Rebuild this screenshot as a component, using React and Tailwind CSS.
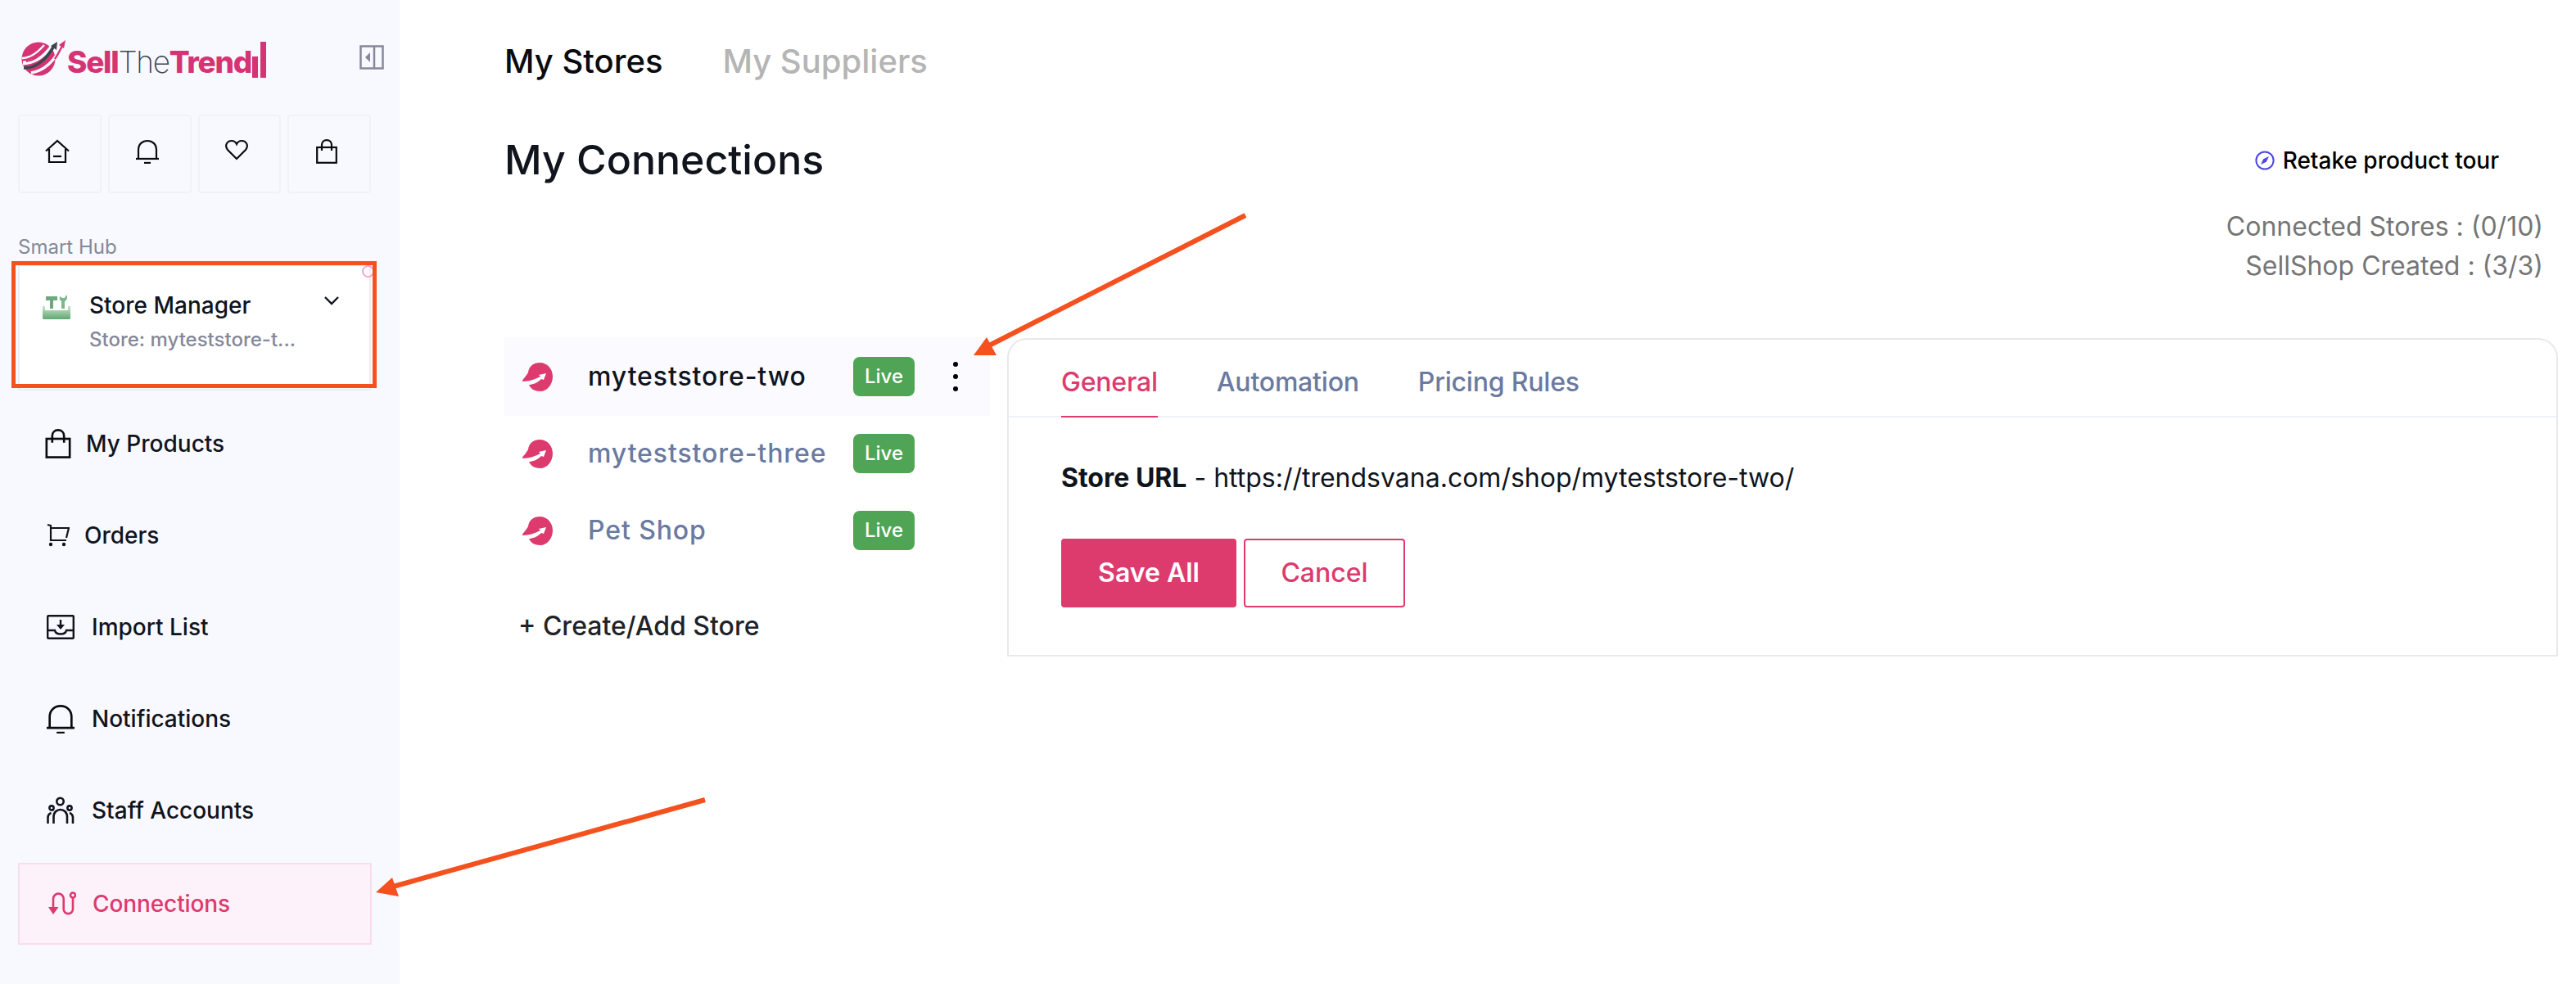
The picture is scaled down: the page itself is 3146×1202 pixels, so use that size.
import React from 'react';

const LogoMark = () => (
    <svg width="56" height="46" viewBox="0 0 56 46" fill="none">
        <circle cx="21" cy="24" r="20.5" fill="#d63375" />
        <path d="M1 23 C10 23 20 16 28 7" stroke="#f8f9fe" strokeWidth="2.5" />
        <path d="M2 29 C14 29 27 21 38 8" stroke="#f8f9fe" strokeWidth="5" />
        <path d="M6 27 C16 26 25 19 33 9" stroke="#d63375" strokeWidth="2" />
        <path d="M3 35 C18 36 31 24 40 8" stroke="#3d4650" strokeWidth="3.6" />
        <path d="M36 8 L44 3 L43 13 Z" fill="#3d4650" />
        <path d="M12 41 C30 38 42 24 50 7" stroke="#f8f9fe" strokeWidth="3.4" />
        <path d="M41 24 C44 20 47 14 49.5 9" stroke="#d63375" strokeWidth="2.4" />
        <path d="M46 7 L54 1 L52 11 Z" fill="#d63375" />
    </svg>
);

const CollapseIcon = () => (
    <svg width="30" height="30" viewBox="0 0 30 30" fill="none" stroke="#85889a" strokeWidth="2.5">
        <rect x="1.5" y="1.5" width="27" height="27" />
        <path d="M18 2 V28" />
        <path d="M13 9 L7 15 L13 21 Z" fill="#85889a" stroke="none" />
    </svg>
);

const HomeIcon = () => (
    <svg width="30" height="30" viewBox="0 0 30 30" fill="none" stroke="#0b0b0f" strokeWidth="2.2">
        <path d="M1 14.5 L15 2 L29 14.5" />
        <path d="M5 12 V28 H25 V12" />
        <path d="M10 21 H20" />
    </svg>
);

const BellIcon = ({ size = 28 }) => (
    <svg width={size} height={size * 1.07} viewBox="0 0 28 30" fill="none" stroke="#0b0b0f" strokeWidth="2.2">
        <path d="M3 24 V13 C3 6 8 2 14 2 C20 2 25 6 25 13 V24" />
        <path d="M0 24 H28" />
        <path d="M10 29 H18" />
    </svg>
);

const HeartIcon = () => (
    <svg width="28" height="26" viewBox="0 0 28 26" fill="none" stroke="#0b0b0f" strokeWidth="2.2">
        <path d="M14 24 L3 13 C-1 8 2 2 8 2 C11 2 13 4 14 6 C15 4 17 2 20 2 C26 2 29 8 25 13 Z" />
    </svg>
);

const BagIcon = ({ w = 26, h = 30 }) => (
    <svg width={w} height={h} viewBox="0 0 26 30" fill="none" stroke="#0b0b0f" strokeWidth="2.2">
        <rect x="1.2" y="10" width="23.6" height="18.8" />
        <path d="M7 14 V7 C7 3.5 9.5 1.2 13 1.2 C16.5 1.2 19 3.5 19 7 V14" />
    </svg>
);

const CartIcon = () => (
    <svg width="28" height="28" viewBox="0 0 28 28" fill="none" stroke="#10141c" strokeWidth="2.2">
        <path d="M1 1 L5 2 V20 H24" />
        <path d="M5 5 H27 L24 17" />
        <circle cx="5" cy="25" r="2.2" fill="#10141c" stroke="none" />
        <circle cx="21" cy="25" r="2.2" fill="#10141c" stroke="none" />
    </svg>
);

const ImportIcon = () => (
    <svg width="34" height="30" viewBox="0 0 34 30" fill="none" stroke="#10141c" strokeWidth="2.4">
        <rect x="1.2" y="1.2" width="31.6" height="27.6" rx="1" />
        <path d="M1 19 H10 C11 25 23 25 24 19 H33" />
        <path d="M17 6 V16" />
        <path d="M12 12 H22 L17 18 Z" fill="#10141c" stroke="none" />
    </svg>
);

const StaffIcon = () => (
    <svg width="34" height="34" viewBox="0 0 34 34" fill="none" stroke="#10141c" strokeWidth="2.6">
        <circle cx="16.5" cy="6" r="4.2" />
        <circle cx="6" cy="14" r="2.6" />
        <circle cx="28" cy="14" r="2.6" />
        <path d="M8.5 33 V25 C8.5 13 25 13 25 25 V33" />
        <path d="M1.5 33 V26 C1.5 22 3 21 5.5 20" />
        <path d="M32 33 V26 C32 22 30.5 21 28 20" />
    </svg>
);

const ConnectionsIcon = () => (
    <svg width="34" height="30" viewBox="0 0 34 30" fill="none" stroke="#dd3a6e" strokeWidth="2.6">
        <path d="M6 20 V9 A6.3 6.3 0 0 1 18.7 9 V21.5 A5.65 5.65 0 0 0 30 21.5 V7.5" />
        <circle cx="30" cy="4.5" r="3" />
        <path d="M0 19 H12.5 L6 28 Z" fill="#dd3a6e" stroke="none" />
    </svg>
);

const ToolboxIcon = () => (
    <svg width="36" height="32" viewBox="0 0 36 32" fill="none">
        <defs>
            <linearGradient id="tb" x1="0" y1="0" x2="0" y2="1">
                <stop offset="0" stopColor="#cfe6d2" />
                <stop offset="1" stopColor="#5fa872" />
            </linearGradient>
        </defs>
        <path d="M1 16 C1 14 4 14 4 16 V20 H32 V16 C32 14 35 14 35 16 V29 C35 31 34 31 33 31 H3 C2 31 1 31 1 29 Z" fill="url(#tb)" />
        <path d="M5 3 H19 V8 H14 V18 H10 V8 H5 Z" fill="#6da97c" />
        <path d="M24 18 V9 C22 8 21 6 22 3 L25 5 L28 5 L30 1 C32 4 31 8 28 9 V18 Z" fill="#7fb78c" />
    </svg>
);

const StoreLogo = () => (
    <svg width="38" height="35" viewBox="0 0 38 35" fill="none">
        <path d="M8 12 C9 4 15 0 22 0 C32 0 38 8 38 17 C38 27 31 35 23 35 C16 35 11 32 9 27 C13 27 19 25 24 20 L27 21 L30 13 L21 15 L23 17 C17 20 9 23 1 23 C1 20 5 18 8 12 Z" fill="#dd3a6e" />
    </svg>
);

const CompassIcon = () => (
    <svg width="24" height="24" viewBox="0 0 24 24" fill="none">
        <circle cx="12" cy="12" r="10.6" stroke="#4f46e5" strokeWidth="2" />
        <path d="M17 7 L13.8 13.8 L7 17 L10.2 10.2 Z" fill="#4f46e5" />
    </svg>
);

const navItems = [
    { label: 'My Products', icon: <BagIcon w={32} h={36} />, iconBox: 'w-[32px] mr-[18px]' },
    { label: 'Orders', icon: <CartIcon />, iconBox: 'w-[28px] mr-[18px] ml-[2px]' },
    { label: 'Import List', icon: <ImportIcon />, iconBox: 'w-[34px] mr-[21px] ml-[2px]' },
    { label: 'Notifications', icon: <BellIcon size={34} />, iconBox: 'w-[34px] mr-[21px] ml-[2px]' },
    { label: 'Staff Accounts', icon: <StaffIcon />, iconBox: 'w-[34px] mr-[21px] ml-[2px]' },
];

const stores = [
    { name: 'myteststore-two', active: true, height: 'h-[96px]' },
    { name: 'myteststore-three', height: 'h-[92px]' },
    { name: 'Pet Shop', height: 'h-[96px]' },
];

const Sidebar = () => (
    <aside className="w-[488px] shrink-0 h-full bg-[#f8f9fe] flex flex-col">
        {/* Logo row */}
        <div className="flex items-start justify-between pt-[46px] pl-[26px] pr-[19px] h-[140px]">
            <div className="flex items-end h-[48px]">
                <LogoMark />
                <div className="flex items-baseline leading-none text-[37px] tracking-[-1.3px] relative">
                    <span className="font-extrabold text-[#d63375]">Sell</span>
                    <span className="font-extralight text-[#3d4650]">The</span>
                    <span className="font-extrabold text-[#d63375]">Trend</span>
                </div>
                <div className="flex items-end gap-[3px] h-[44px] ml-[1px] mb-[-1px]">
                    <span className="w-[7px] h-[26px] bg-[#d63375]" />
                    <span className="w-[7px] h-[44px] bg-[#d63375]" />
                </div>
            </div>
            <div className="mt-[9px]">
                <CollapseIcon />
            </div>
        </div>

        {/* Quick icons */}
        <div className="grid grid-cols-4 gap-2 ml-[22px] w-[431px]">
            {[<HomeIcon />, <BellIcon />, <HeartIcon />, <BagIcon />].map((icon, i) => (
                <div key={i} className="h-[96px] rounded border-2 border-[#f1f2f7] flex justify-center pt-[28px] pr-[6px]">
                    {icon}
                </div>
            ))}
        </div>

        <div className="mt-[50px] ml-[22px] text-[24px] leading-[32px] text-[#85889a]">Smart Hub</div>

        {/* Store manager */}
        <div className="relative mt-[5px] ml-[22px] w-[431px] h-[154px] bg-white border-2 border-[#eceef4] pl-[27px] pt-[28px]">
            <div className="flex">
                <div className="w-[58px] pt-[6px]">
                    <ToolboxIcon />
                </div>
                <div>
                    <div className="text-[28px] leading-[40px] font-medium text-[#10141c]">Store Manager</div>
                    <div className="text-[24px] leading-[36px] mt-[4px] font-medium text-[#85889a]">Store: myteststore-t...</div>
                </div>
            </div>
            <svg className="absolute left-[371px] top-[36px]" width="20" height="12" viewBox="0 0 20 12" fill="none" stroke="#10141c" strokeWidth="2.4">
                <path d="M2 2 L10 10 L18 2" />
            </svg>
            <span className="absolute left-[418px] top-[-1px] w-[15px] h-[15px] rounded-full border-2 border-[#f7a3cf]" />
            <span className="absolute left-[-10px] top-[-6px] w-[446px] h-[155px] border-[5px] border-[#f4511e]" />
        </div>

        {/* Nav */}
        <nav className="mt-[9px] flex flex-col">
            {navItems.map((item) => (
                <div key={item.label} className="h-[112px] flex items-center pl-[55px]">
                    <div className={`flex justify-center ${item.iconBox}`}>{item.icon}</div>
                    <span className="text-[28px] font-medium text-[#10141c]">{item.label}</span>
                </div>
            ))}
        </nav>
        <div className="mt-[8px] ml-[22px] w-[432px] h-[100px] flex items-center pl-[35px] bg-[#fdf2fa] border-2 border-[#fbdcec]">
            <ConnectionsIcon />
            <span className="ml-[20px] text-[28px] font-medium tracking-[-0.1px] text-[#dd3a6e]">Connections</span>
        </div>
    </aside>
);

const StoreRow = ({ store }) => (
    <div className={`flex items-center pl-[21px] ${store.height} ${store.active ? 'bg-[#fafaff]' : ''}`}>
        <div className="w-[38px] shrink-0">
            <StoreLogo />
        </div>
        <span className={`ml-[43px] w-[324px] shrink-0 text-[32px] font-medium tracking-[0.9px] ${store.active ? 'text-[#10141c]' : 'text-[#6b7aa1]'}`}>
            {store.name}
        </span>
        <span className="w-[75px] h-[48px] rounded-lg bg-[#4fa455] text-white text-[24px] font-medium flex items-center justify-center">
            Live
        </span>
        {store.active && (
            <div className="ml-[47px] flex flex-col gap-[9px]">
                <span className="w-[6px] h-[6px] rounded-full bg-black" />
                <span className="w-[6px] h-[6px] rounded-full bg-black" />
                <span className="w-[6px] h-[6px] rounded-full bg-black" />
            </div>
        )}
    </div>
);

const Main = () => (
    <main className="flex-1 pt-[51px] pl-[128px] pr-[22px]">
        <div className="flex gap-[73px] text-[40px] leading-[48px] font-medium">
            <span className="text-[#0b0b0f]">My Stores</span>
            <span className="text-[#b5b5b5]">My Suppliers</span>
        </div>

        <div className="mt-[67px] h-[58px] flex items-center justify-between">
            <h1 className="text-[50px] font-medium text-[#10141c]">My Connections</h1>
            <div className="flex items-center gap-[10px] pr-[72px] pt-[2px]">
                <CompassIcon />
                <span className="text-[28px] font-medium text-black">Retake product tour</span>
            </div>
        </div>

        <div className="mt-[29px] pr-[18px] text-right text-[32px] leading-[48px] text-[#757575]">
            <div>Connected Stores : (0/10)</div>
            <div>SellShop Created : (3/3)</div>
        </div>

        <div className="mt-[63px] flex">
            <div className="w-[593px] shrink-0">
                {stores.map((store) => (
                    <StoreRow key={store.name} store={store} />
                ))}
                <div className="mt-[45px] pl-[17px] text-[32px] leading-[48px] font-medium text-[#1f2328]">+ Create/Add Store</div>
            </div>

            <div className="ml-[21px] mt-px flex-1 h-[389px] border-2 border-[#e8e9ec] rounded-t-[24px]">
                <div className="h-[95px] flex gap-[72px] pl-[64px] border-b-2 border-[#eef1f8] text-[32px] tracking-[-0.2px]">
                    <span className="h-[95px] -mb-[2px] pt-[28px] font-medium text-[#dd3a6e] border-b-2 border-[#dd3a6e]">General</span>
                    <span className="pt-[28px] font-medium text-[#6b7aa1]">Automation</span>
                    <span className="pt-[28px] font-medium text-[#6b7aa1]">Pricing Rules</span>
                </div>
                <div className="pl-[64px]">
                    <div className="mt-[50px] text-[32px] leading-[48px] text-[#10141c]">
                        <span className="font-bold">Store URL</span> - https://trendsvana.com/shop/myteststore-two/
                    </div>
                    <div className="mt-[50px] flex gap-[9px]">
                        <button className="w-[214px] h-[84px] rounded bg-[#dd3a6e] text-white text-[32px] font-semibold">Save All</button>
                        <button className="w-[197px] h-[84px] rounded border-2 border-[#dd3a6e] bg-white text-[#dd3a6e] text-[32px] font-medium">Cancel</button>
                    </div>
                </div>
            </div>
        </div>
    </main>
);

export default function App() {
    return (
        <div className="relative flex w-[3146px] h-[1202px] overflow-hidden bg-white font-['Inter',sans-serif]">
            <Sidebar />
            <Main />

            {/* Annotation arrows */}
            <svg className="absolute inset-0 pointer-events-none" width="3146" height="1202" viewBox="0 0 3146 1202" fill="none">
                <path d="M1521 263 L1208 422" stroke="#f4511e" strokeWidth="6" />
                <path d="M1189 434 L1205 412 L1217 434 Z" fill="#f4511e" />
                <path d="M861 977 L480 1083" stroke="#f4511e" strokeWidth="6" />
                <path d="M459 1090 L479 1072 L487 1095 Z" fill="#f4511e" />
            </svg>
        </div>
    );
}
